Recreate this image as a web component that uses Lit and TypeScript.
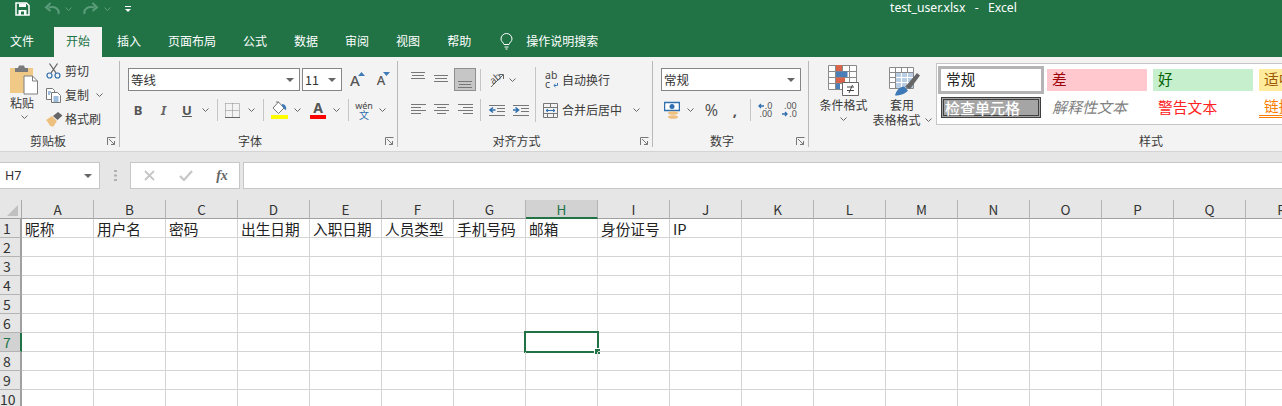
import { LitElement, html, css, svg } from "lit";
import { customElement } from "lit/decorators.js";

const chev = html`<svg class="chev" width="7" height="4" viewBox="0 0 7 4"><path d="M.5.5l3 3 3-3" fill="none" stroke="#666"/></svg>`;
const tri = html`<svg width="8" height="4" viewBox="0 0 8 4"><path d="M0 0h8L4 4z" fill="#666"/></svg>`;
const launcher = html`<svg class="launcher" width="9" height="9" viewBox="0 0 9 9"><path d="M.5 8V.5H8.500M2 2l5.500 5.500M7.500 4v3.500H4" fill="none" stroke="#777"/></svg>`;

const lines = (ys: [number, number, number][]) =>
  html`<svg width="15" height="14" viewBox="0 0 15 14">${ys.map(
    ([y, a, b]) => svg`<path d="M${a} ${y}.5H${b}" stroke="#777"/>`
  )}</svg>`;

const save = html`<svg width="15" height="14" viewBox="0 0 15 14"><path d="M1 1h10.500L14 3.500V13H1z" fill="none" stroke="#fff" stroke-width="1.500"/><path d="M4 1.500h7v3.500H4zM3.500 8h8v5h-8z" fill="#fff"/><path d="M6 9.500h3v3H6z" fill="#217346"/></svg>`;
const undo = html`<svg width="16" height="13" viewBox="0 0 16 13"><path d="M14.500 12c1-5-3-8-10-6.500M6.500 1L2 5.500 6.500 9" fill="none" stroke="#5b9c7a" stroke-width="2"/></svg>`;
const redo = html`<svg width="16" height="13" viewBox="0 0 16 13"><path d="M1.500 12c-1-5 3-8 10-6.500M9.500 1L14 5.500 9.500 9" fill="none" stroke="#5b9c7a" stroke-width="2"/></svg>`;
const qatDrop = html`<svg width="8" height="8" viewBox="0 0 8 8"><path d="M1 1.500h6" stroke="#fff"/><path d="M1 4h6L4 7z" fill="#fff"/></svg>`;
const bulb = html`<svg width="13" height="17" viewBox="0 0 13 17"><path d="M4 11.500C3.500 9.500 1 8.500 1 6a5.500 5.500 0 0 1 11 0c0 2.500-2.500 3.500-3 5.500zM4.500 14h4M5.500 16h2" fill="none" stroke="#fff"/></svg>`;

const paste = html`<svg width="28" height="30" viewBox="0 0 28 30"><path d="M0 3h23v25H0z" fill="#f0c987"/><path d="M5 3h3l1-2.500h5L15 3h3v4H5z" fill="#7a7a7a"/><path d="M14 11h8.500l5 5v13H14z" fill="#fff" stroke="#7f7f7f"/><path d="M22.500 11v5h5" fill="none" stroke="#7f7f7f"/></svg>`;
const scissors = html`<svg width="15" height="16" viewBox="0 0 15 16"><path d="M5 10L11.500.5M10 10L3.500.5" stroke="#666" stroke-width="1.300"/><circle cx="3.500" cy="12.500" r="2.500" fill="none" stroke="#2f6fae" stroke-width="1.200"/><circle cx="11.500" cy="12.500" r="2.500" fill="none" stroke="#2f6fae" stroke-width="1.200"/></svg>`;
const copy = html`<svg width="15" height="15" viewBox="0 0 15 15"><path d="M.5.500h6l2 2v9h-8z" fill="#fff" stroke="#777"/><path d="M5.500 4.500h6l3 3v7h-9z" fill="#fff" stroke="#777"/><path d="M2 4h3M2 6h2M7.500 9h5M7.500 11h5M7.500 13h5" stroke="#3e7ab8"/></svg>`;
const painter = html`<svg width="17" height="15" viewBox="0 0 17 15"><path d="M0 8l6-4 5 5-4 6c-1-1-1.500-1-3-1-1-2-2-4-4-6z" fill="#eec07f"/><path d="M7 4l5-4 4.500 3.500L11.500 8z" fill="#666"/></svg>`;

const borders = html`<svg width="15" height="15" viewBox="0 0 15 15"><path d="M.5.500h14M.5 7.500h14M.5.500v14M7.500.500v14M14.500.500v14" fill="none" stroke="#888" stroke-dasharray="1 1"/><path d="M0 14.500h15" stroke="#666"/></svg>`;
const fill = html`<svg width="17" height="18" viewBox="0 0 17 18"><path d="M7.500 1L2 7l5.500 5.500L13 7z" fill="#fff" stroke="#777"/><path d="M5 1h3" stroke="#777"/><path d="M11 3c3 0 5 3 4 6-1.500 0-2-2-4-4z" fill="#3e7ab8"/><path d="M0 14h17v4H0z" fill="#ff0"/></svg>`;

const topA = html`<svg width="14" height="7" viewBox="0 0 14 7"><path d="M0 .5h14M1 3.500h12M0 6.500h14" stroke="#777"/></svg>`;
const wrapArrow = html`<svg width="5" height="5" viewBox="0 0 5 5"><path d="M4.500 0v2.500H1M2.500 1L.8 2.500 2.500 4" fill="none" stroke="#3e7ab8"/></svg>`;
const orientArrow = html`<svg width="17" height="16" viewBox="0 0 17 16"><path d="M3 15L15 3M11 2.500h4.500V7" fill="none" stroke="#666"/></svg>`;
const indentL = html`<svg width="17" height="11" viewBox="0 0 17 11"><path d="M1 .5h16M9 3.500h8M9 6.500h8M1 10.500h16" stroke="#777"/><path d="M7.500 5H3M5 2.500L2 5l3 2.500" fill="none" stroke="#2f6fae" stroke-width="1.600"/></svg>`;
const indentR = html`<svg width="17" height="11" viewBox="0 0 17 11"><path d="M1 .5h16M9 3.500h8M9 6.500h8M1 10.500h16" stroke="#777"/><path d="M1 5h4.500M3.500 2.500l3 2.500-3 2.500" fill="none" stroke="#2f6fae" stroke-width="1.600"/></svg>`;
const merge = html`<svg width="15" height="15" viewBox="0 0 15 15"><path d="M.5.500h14v14H.5zM.5 4.500h14M.5 10.500h14M7.500.500v4M4.500 10.500v4M10.500 10.500v4" fill="none" stroke="#777"/><path d="M3 7.500h9M5 6L3 7.500 5 9M10 6l2 1.500L10 9" fill="none" stroke="#2f6fae"/></svg>`;

const currency = html`<svg width="16" height="18" viewBox="0 0 16 18"><path d="M.5 1.500h15v8H.5z" fill="#fff" stroke="#2f6fae" stroke-width="1.500"/><circle cx="8" cy="5.500" r="2.500" fill="#2f6fae"/><ellipse cx="9" cy="12" rx="5" ry="1.800" fill="#eec07f"/><ellipse cx="9" cy="16" rx="5" ry="1.800" fill="#eec07f"/></svg>`;
const arrowL = html`<svg width="6" height="6" viewBox="0 0 6 6"><path d="M6 3H1M3 1L1 3l2 2" fill="none" stroke="#2f6fae" stroke-width="1.300"/></svg>`;
const arrowR = html`<svg width="6" height="6" viewBox="0 0 6 6"><path d="M0 3h5M3 1l2 2-2 2" fill="none" stroke="#2f6fae" stroke-width="1.300"/></svg>`;

const condFmt = html`<svg width="32" height="31" viewBox="0 0 32 31"><path d="M.5.500h28v24H.5zM7.500.500v24M14.500.500v24M21.500.500v24M.5 6.500h28M.5 12.500h28M.5 18.500h28" fill="#fff" stroke="#8a8a8a"/><path d="M8 0h6v6H8zM8 12.500h9V18H8z" fill="#d9644a"/><path d="M8 6.500h11.500V12H8zM8 18.500h4V24H8z" fill="#4a7fb8"/><path d="M14.500 17.500h16v13h-16z" fill="#fff" stroke="#666"/><path d="M19 22h7M19 25.500h7M24.500 20l-3.500 8" fill="none" stroke="#444"/></svg>`;
const tableFmt = html`<svg width="32" height="29" viewBox="0 0 32 29"><path d="M.5.500h24v21H.5zM.5 5.500h24M.5 10.500h24M.5 15.500h24M6.500.500v21M12.500.500v21M18.500.500v21" fill="#fff" stroke="#8a8a8a"/><path d="M7 6h17v15H7z" fill="#b9cde5"/><path d="M7 10.500h17M7 15.500h17M12.500 6v15M18.500 6v15" stroke="#fff"/><path d="M16 20L28 6l3 2.500L21 22z" fill="#666"/><path d="M6 28.500c1-5 5-9 9-9l4 4c-2 3-8 5-13 5z" fill="#3e7ab8"/></svg>`;
const corner = html`<svg width="11" height="11" viewBox="0 0 11 11"><path d="M11 0v11H0z" fill="#c0c0c0"/></svg>`;
const cross = html`<svg width="11" height="11" viewBox="0 0 11 11"><path d="M1 1l9 9M10 1l-9 9" stroke="#c6c6c6" stroke-width="1.800"/></svg>`;
const check = html`<svg width="14" height="11" viewBox="0 0 14 11"><path d="M1 6l4 4 8-9" fill="none" stroke="#c6c6c6" stroke-width="2.200"/></svg>`;
const dots = html`<svg width="3" height="11" viewBox="0 0 3 11"><path d="M0 0h3v2H0zM0 4.500h3v2H0zM0 9h3v2H0z" fill="#b0b0b0"/></svg>`;

const COLS = "ABCDEFGHIJKLMNOPQR".split("");
const ROW1 = ["昵称", "用户名", "密码", "出生日期", "入职日期", "人员类型", "手机号码", "邮箱", "身份证号", "IP"];
const TABS = ["开始", "插入", "页面布局", "公式", "数据", "审阅", "视图", "帮助"];

@customElement("app-root")
export class AppRoot extends LitElement {
  static styles = css`
    :host { display: block; width: 1282px; height: 406px; overflow: hidden; background: #fff;
      font-family: "Noto Sans CJK SC", "Noto Sans", sans-serif; font-size: 12px; color: #3a3a3a; line-height: 16px; }
    svg { display: block; }
    .grid { display: grid; align-items: center; justify-items: center; }
    .vs { width: 1px; height: 22px; background: #c6c6c6; }

    .head { background: #217346; height: 57px; color: #fff; }
    .title { display: flex; height: 27px; align-items: center; }
    .qat { padding-left: 12px; grid-template-columns: 20px 10px 20px 12px 7px 20px 12px 10px 10px; }
    .qat .chev path { stroke: #5b9c7a; }
    .qat svg { margin-top: -10px; }
    .fname { margin-left: 757px; margin-top: -11px; font-family: "Noto Sans", sans-serif; white-space: pre; font-size: 12.2px; word-spacing: 1.5px; }
    .tabs { display: flex; height: 30px; gap: 3px; padding-left: 10px; }
    .tab { padding: 0 12px; line-height: 28px; }
    .tab.first { padding-left: 0; margin-right: 5px; }
    .tab.on { background: #f3f3f3; color: #217346; }
    .search { display: flex; align-items: center; gap: 13px; margin-left: 14px; height: 28px; }

    .ribbon { display: flex; height: 94px; background: #f3f3f3; border-bottom: 1px solid #d4d4d4; overflow: hidden; }
    .sep { flex: none; width: 1px; margin: 4px 0; background: #b8b8b8; }
    .group { flex: none; display: flex; flex-direction: column; }
    .body { height: 74px; }
    .foot { height: 20px; display: flex; align-items: center; line-height: 20px; }
    .foot span { flex: 1; text-align: center; }
    .lbox { width: 17px; display: flex; justify-content: flex-end; padding-right: 3px; box-sizing: border-box; }

    .clip { width: 119px; }
    .clip .body { display: flex; }
    .pastebox { width: 46px; padding: 8px 0 0 10px; box-sizing: border-box; }
    .pastebox .chev { margin: 4px 0 0 11px; }
    .cuts { padding-top: 2px; }
    .cut { display: grid; grid-template-columns: 19px 36px; height: 24px; align-items: center; width: 64px; white-space: nowrap; }
    .cut.w { grid-template-columns: 19px 31px 7px; }
    .clip .foot span { padding-right: 6px; }

    .font { width: 277px; }
    .font .body, .num .body { padding: 11px 0 0 8px; box-sizing: border-box; }
    .frow { grid-template-columns: 172px 40px 25px 23px; column-gap: 2px; justify-items: stretch; }
    .sel { height: 23px; box-sizing: border-box; border: 1px solid #868686; background: #fff; display: flex; align-items: center; justify-content: space-between; padding: 0 5px 0 2px; color: #333; font-size: 12.5px; }
    .growa { position: relative; justify-self: center; margin-right: 3px; font-size: 15px; font-weight: 500; color: #555; line-height: 20px; font-family: "Noto Sans", sans-serif; }
    .growa.s { font-size: 13px; }
    .growa svg { position: absolute; top: 2px; right: -5px; }
    .row2 { margin-top: 8px; height: 22px; }
    .ftools { grid-template-columns: 20px 31px 16px 20px 4px 27px 10px 14px 18px 18px 24px 12px 12px 20px 16px; }
    .b { font: bold 13px "Noto Sans", sans-serif; color: #555; }
    .i { font: italic bold 13px "Noto Sans", sans-serif; color: #666; }
    .u { font: bold 13px "Noto Sans", sans-serif; color: #555; text-decoration: underline; }
    .fcolor { display: flex; flex-direction: column; align-items: center; font: bold 14px/14px "Noto Sans", sans-serif; color: #555; }
    .fcolor i { display: block; width: 16px; height: 4px; background: #f00; }
    .wen { display: flex; flex-direction: column; align-items: center; font: 9px/9px "Noto Sans", sans-serif; color: #444; }
    .wen b { font: 10px/10px "Noto Sans CJK SC", sans-serif; color: #2f6fae; }

    .align { width: 254px; }
    .align .body { display: flex; padding: 11px 0 0 10px; box-sizing: border-box; }
    .al { width: 127px; }
    .arow1 { grid-template-columns: 20px 26px 22px 8px 24px 8px; height: 23px; }
    .arow2 { grid-template-columns: 20px 26px 22px 8px 24px 24px; }
    .alt { align-self: start; margin-top: 4px; }
    .alm { align-self: start; margin-top: 7px; }
    .active { width: 22px; height: 23px; box-sizing: border-box; background: #c6c6c6; border: 1px solid #8f8f8f; display: flex; align-items: flex-end; justify-content: center; padding-bottom: 2px; }
    .ori { position: relative; width: 17px; height: 16px; }
    .ori span { position: absolute; left: 1px; top: 1px; font: 10px/10px "Noto Sans", sans-serif; color: #555; transform: rotate(-40deg); }
    .vsep { width: 1px; height: 55px; margin-top: -1px; background: #c6c6c6; }
    .wr { padding-left: 7px; }
    .wrow { display: grid; grid-template-columns: 19px 60px 28px; align-items: center; height: 23px; justify-items: start; }
    .wrow.m { margin-top: 8px; height: 22px; }
    .wrow .chev { justify-self: center; }
    .abc { position: relative; display: block; width: 13px; font: 10.5px/9px "Noto Sans", sans-serif; color: #444; margin-left: 2px; }
    .abc svg { position: absolute; right: 0; bottom: 1px; }

    .num { width: 155px; }
    .numsel { width: 140px; }
    .ntools { grid-template-columns: 22px 14px 29px 18px 12px 18px 31px; }
    .pct { font: 16px "Noto Sans", sans-serif; color: #555; }
    .cm { font: bold 15px/10px "Noto Sans", sans-serif; color: #555; }
    .decb { display: flex; flex-direction: column; align-items: flex-end; font: 9px/8px "Noto Sans", sans-serif; color: #555; }
    .decb div { display: flex; align-items: center; gap: 1px; }

    .styles { width: 684px; }
    .styles .body { display: flex; padding-left: 10px; box-sizing: border-box; }
    .bigbtn { display: flex; flex-direction: column; align-items: center; padding-top: 8px; box-sizing: border-box; width: 49px; white-space: nowrap; }
    .bigbtn.t { width: 68px; }
    .bigbtn .ic { height: 32px; }
    .bigbtn.t .ic { margin-left: 5px; padding-top: 2px; box-sizing: border-box; }
    .bigbtn > .chev { margin-top: 4px; }
    .tline { display: flex; align-items: center; gap: 4px; margin-top: -1px; }
    .gallery { margin-top: 6px; width: 480px; height: 62px; box-sizing: border-box; border: 1px solid #c6c6c6; background: #fff; padding: 5px 0 0 4px;
      display: grid; grid-template-columns: repeat(4, 100px); column-gap: 6px; row-gap: 6px; grid-template-rows: 22px 21px; }
    .st { font-size: 14.67px; line-height: 20px; padding-left: 5px; white-space: nowrap; }
    .normal { outline: 3px solid #b4b4b4; color: #222; }
    .bad { background: #ffc7ce; color: #9c0006; }
    .good { background: #c6efce; color: #006100; }
    .neu { background: #ffeb9c; color: #9c5700; }
    .chk { background: #a5a5a5; color: #fff; border: 3px double #3f3f3f; padding-left: 1px; line-height: 15px; box-sizing: border-box; font-size: 15px; font-weight: 500; }
    .exp { color: #7f7f7f; font-style: italic; font-size: 15px; }
    .warn { color: #f22; font-size: 14.8px; }
    .link { color: #fa7d00; border-bottom: 3px double #fa7d00; box-sizing: border-box; line-height: 18px; }

    .fbar { height: 48px; background: #e6e6e6; padding-top: 10px; box-sizing: border-box; display: flex; }
    .namebox { width: 100px; height: 27px; box-sizing: border-box; background: #fff; border: 1px solid #c6c6c6; border-left: 0; display: flex; align-items: center; justify-content: space-between; padding: 0 7px 0 5px; font: 12.500px "Noto Sans", sans-serif; color: #333; }
    .dots { width: 30px; height: 27px; display: flex; align-items: center; justify-content: center; }
    .fxbox { width: 110px; height: 27px; box-sizing: border-box; background: #fff; border: 1px solid #c6c6c6; grid-template-columns: 37px 36px 36px; }
    .fx { font: italic 600 14px "Liberation Serif", serif; color: #666; }
    .input { flex: 1; height: 27px; box-sizing: border-box; margin-left: 3px; background: #fff; border: 1px solid #c6c6c6; border-right: 0; }

    .sheet { display: grid; grid-template-columns: 22px repeat(18, 72px); grid-auto-rows: 19px; height: 206px; overflow: hidden; }
    .sheet > div { box-sizing: border-box; white-space: nowrap; }
    .cor { background: #e6e6e6; border-right: 1px solid #a8a8a8; border-bottom: 1px solid #a0a0a0; display: flex; padding: 5px 0 0 7px; }
    .ch { background: #e6e6e6; border-right: 1px solid #b4b4b4; border-bottom: 1px solid #a0a0a0; text-align: center; font: 13.500px/19px "Noto Sans CJK SC", sans-serif; color: #333; }
    .ch.on { background: #d2d2d2; color: #217346; border-bottom: 2px solid #217346; }
    .rh { background: #e6e6e6; border-right: 2px solid #a0a0a0; border-bottom: 1px solid #b4b4b4; padding-right: 6px; text-align: center; font: 14px/19px "Noto Sans CJK SC", sans-serif; color: #333; }
    .rh.on { background: #d2d2d2; color: #217346; border-right: 2px solid #217346; }
    .c { position: relative; border-right: 1px solid #d4d4d4; border-bottom: 1px solid #d4d4d4; padding-left: 3px; font: 14.670px/20px "Noto Sans CJK SC", sans-serif; color: #222; }
    .cursor { position: absolute; left: -2px; top: -2px; width: 75px; height: 22px; box-sizing: border-box; border: 2px solid #217346; }
    .handle { position: absolute; right: -4px; bottom: -4px; width: 5px; height: 5px; background: #217346; border: 1px solid #fff; }
  `;

  private foot(label: string, hasLauncher = true) {
    return html`<div class="foot"><span>${label}</span>${hasLauncher ? html`<div class="lbox">${launcher}</div>` : ""}</div>`;
  }

  private header() {
    return html`<div class="head">
      <div class="title">
        <div class="grid qat">${save}<i></i>${undo}${chev}<i></i>${redo}${chev}<i></i>${qatDrop}</div>
        <div class="fname">test_user.xlsx  -  Excel</div>
      </div>
      <div class="tabs">
        <div class="tab first">文件</div>
        ${TABS.map((t, i) => html`<div class="tab ${i === 0 ? "on" : ""}">${t}</div>`)}
        <div class="search">${bulb}<span>操作说明搜索</span></div>
      </div>
    </div>`;
  }

  private clipboard() {
    return html`<div class="group clip">
      <div class="body">
        <div class="pastebox">${paste}<div>粘贴</div>${chev}</div>
        <div class="cuts">
          <div class="cut">${scissors}<span>剪切</span></div>
          <div class="cut w">${copy}<span>复制</span>${chev}</div>
          <div class="cut">${painter}<span>格式刷</span></div>
        </div>
      </div>
      ${this.foot("剪贴板")}
    </div>`;
  }

  private fontGroup() {
    const up = html`<svg width="7" height="4" viewBox="0 0 7 4"><path d="M0 4h7L3.500 0z" fill="#3e7ab8"/></svg>`;
    const down = html`<svg width="7" height="4" viewBox="0 0 7 4"><path d="M0 0h7L3.500 4z" fill="#3e7ab8"/></svg>`;
    return html`<div class="group font">
      <div class="body">
        <div class="grid frow">
          <div class="sel">等线${tri}</div>
          <div class="sel">11${tri}</div>
          <div class="growa">A${up}</div>
          <div class="growa s">A${down}</div>
        </div>
        <div class="grid row2 ftools">
          <span class="b">B</span><span class="i">I</span><span class="u">U</span>${chev}
          <div class="vs"></div>${borders}${chev}<div class="vs"></div>${fill}${chev}
          <div class="fcolor">A<i></i></div>${chev}<div class="vs"></div>
          <div class="wen">wén<b>文</b></div>${chev}
        </div>
      </div>
      ${this.foot("字体")}
    </div>`;
  }

  private alignGroup() {
    return html`<div class="group align">
      <div class="body">
        <div class="al">
          <div class="grid arow1">
            <div class="alt">${topA}</div><div class="alm">${topA}</div>
            <div class="active">${topA}</div><div class="vs"></div>
            <div class="ori"><span>ab</span>${orientArrow}</div>${chev}
          </div>
          <div class="grid row2 arow2">
            ${lines([[1, 0, 15], [4, 0, 10], [7, 0, 15], [10, 0, 10]])}
            ${lines([[1, 0, 15], [4, 3, 12], [7, 0, 15], [10, 3, 12]])}
            ${lines([[1, 0, 15], [4, 5, 15], [7, 0, 15], [10, 5, 15]])}
            <div class="vs"></div>${indentL}${indentR}
          </div>
        </div>
        <div class="vsep"></div>
        <div class="wr">
          <div class="wrow"><span class="abc">ab<br />c${wrapArrow}</span><span>自动换行</span></div>
          <div class="wrow m">${merge}<span>合并后居中</span>${chev}</div>
        </div>
      </div>
      ${this.foot("对齐方式")}
    </div>`;
  }

  private numberGroup() {
    return html`<div class="group num">
      <div class="body">
        <div class="sel numsel">常规${tri}</div>
        <div class="grid row2 ntools">
          ${currency}${chev}<span class="pct">%</span><span class="cm">,</span>
          <div class="vs"></div>
          <div class="decb"><div>${arrowL}.0</div><div>.00</div></div>
          <div class="decb"><div>.00</div><div>${arrowR}.0</div></div>
        </div>
      </div>
      ${this.foot("数字")}
    </div>`;
  }

  private stylesGroup() {
    return html`<div class="group styles">
      <div class="body">
        <div class="bigbtn"><div class="ic">${condFmt}</div><div>条件格式</div>${chev}</div>
        <div class="bigbtn t">
          <div class="ic">${tableFmt}</div><div>套用</div>
          <div class="tline"><span>表格格式</span>${chev}</div>
        </div>
        <div class="gallery">
          <div class="st normal">常规</div><div class="st bad">差</div><div class="st good">好</div><div class="st neu">适中</div>
          <div class="st chk">检查单元格</div><div class="st exp">解释性文本</div><div class="st warn">警告文本</div><div class="st link">链接</div>
        </div>
      </div>
      ${this.foot("样式", false)}
    </div>`;
  }

  private sheet() {
    const rows = [1, 2, 3, 4, 5, 6, 7, 8, 9, 10, 11];
    return html`<div class="sheet">
      <div class="cor">${corner}</div>
      ${COLS.map((c) => html`<div class="ch ${c === "H" ? "on" : ""}">${c}</div>`)}
      ${rows.map(
        (r) => html`<div class="rh ${r === 7 ? "on" : ""}">${r}</div>
          ${COLS.map(
            (c, i) => html`<div class="c">
              ${r === 1 ? ROW1[i] ?? "" : ""}
              ${r === 7 && c === "H" ? html`<div class="cursor"><div class="handle"></div></div>` : ""}
            </div>`
          )}`
      )}
    </div>`;
  }

  render() {
    return html`
      ${this.header()}
      <div class="ribbon">
        ${this.clipboard()}<div class="sep"></div>
        ${this.fontGroup()}<div class="sep"></div>
        ${this.alignGroup()}<div class="sep"></div>
        ${this.numberGroup()}<div class="sep"></div>
        ${this.stylesGroup()}
      </div>
      <div class="fbar">
        <div class="namebox">H7${tri}</div>
        <div class="dots">${dots}</div>
        <div class="grid fxbox">${cross}${check}<span class="fx">fx</span></div>
        <div class="input"></div>
      </div>
      ${this.sheet()}
    `;
  }
}
